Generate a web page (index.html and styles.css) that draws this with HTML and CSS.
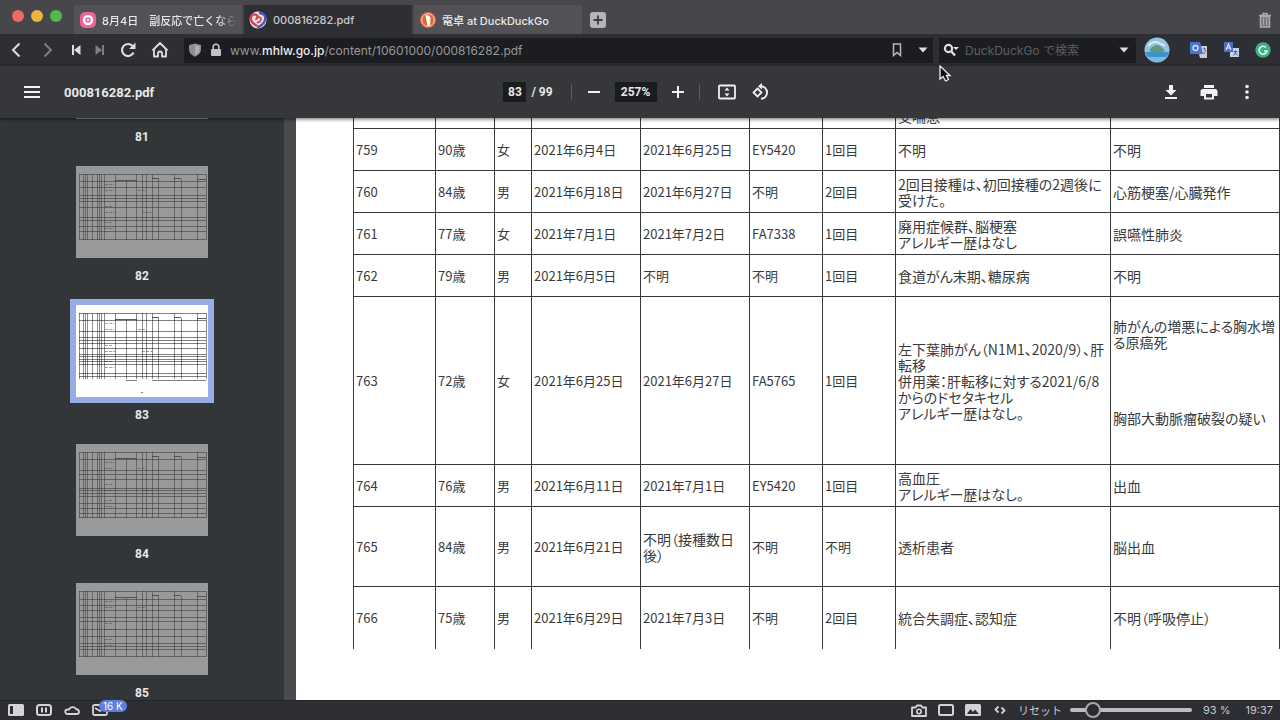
FILE: index.html
```html
<!DOCTYPE html>
<html lang="ja">
<head>
<meta charset="utf-8">
<title>000816282.pdf</title>
<link rel="stylesheet" href="styles.css">
</head>
<body>
<header class="tabbar">
  <div class="lights"><i class="light red"></i><i class="light yellow"></i><i class="light green"></i></div>
  <nav class="tabs">
    <button class="tab">
      <svg width="16" height="16" viewBox="0 0 16 16"><rect width="16" height="16" rx="5" fill="#f0609a"/><circle cx="8" cy="8" r="4" fill="none" stroke="#fff" stroke-width="2.4"/><circle cx="8" cy="8" r="1.2" fill="#fff"/></svg>
      <span class="tab-label fade">8月4日　副反応で亡くなら</span>
    </button>
    <button class="tab active">
      <svg width="18" height="18" viewBox="0 0 18 18"><circle cx="9" cy="9" r="8.5" fill="#e4e3ee"/><path d="M8 15C3 12 1 9 2 6s5-4 7 0" fill="none" stroke="#d9404c" stroke-width="2.4"/><path d="M10 2c5 0 7 3 6 7s-5 7-8 7" fill="none" stroke="#4a58b5" stroke-width="2.4"/><path d="M7 9c0-3 5-4 5-1s-3 4-4 3" fill="none" stroke="#d9404c" stroke-width="1.8"/></svg>
      <span class="tab-label">000816282.pdf</span>
    </button>
    <button class="tab">
      <svg width="16" height="16" viewBox="0 0 16 16"><circle cx="8" cy="8" r="8" fill="#d9663e"/><circle cx="8" cy="8" r="6.3" fill="none" stroke="#f4d9cd" stroke-width="1"/><path d="M5.5 3.5C8 2.5 10.500 4 10.500 6.500L10 13.500 7.500 14z" fill="#fff"/><path d="M9 8l3 .5-3 1z" fill="#f3c13a"/></svg>
      <span class="tab-label">電卓 at DuckDuckGo</span>
    </button>
    <button class="icon newtab" aria-label="新しいタブ"><svg width="16" height="16" viewBox="0 0 16 16"><rect width="16" height="16" rx="3" fill="#b5b5b8"/><path d="M8 3.500v9M3.500 8h9" stroke="#3c3c40" stroke-width="1.800"/></svg></button>
  </nav>
  <button class="icon trash" aria-label="閉じたタブ"><svg width="14" height="16" viewBox="0 0 14 16"><path d="M1 3.500h12M5 3V1.500h4V3" fill="none" stroke="#aaaaad" stroke-width="1.600"/><path d="M2.500 4.500h9V15h-9z" fill="#77777b" stroke="#aaaaad" stroke-width="1.500"/><path d="M5.500 6v7M8.500 6v7" stroke="#aaaaad"/></svg></button>
</header>

<div class="navbar">
  <div class="nav-buttons">
    <button class="icon" aria-label="戻る"><svg width="16" height="18" viewBox="0 0 16 18"><path d="M11.500 2.500 5 9l6.500 6.500" fill="none" stroke="#dededf" stroke-width="2"/></svg></button>
    <button class="icon dim" aria-label="進む"><svg width="16" height="18" viewBox="0 0 16 18"><path d="M4.500 2.500 11 9l-6.500 6.500" fill="none" stroke="#dededf" stroke-width="2"/></svg></button>
    <button class="icon narrow" aria-label="巻き戻し"><svg width="10" height="12" viewBox="0 0 10 12"><path d="M1 1h2v10H1zM9.500 1v10L3 6z" fill="#dededf"/></svg></button>
    <button class="icon narrow dim" aria-label="早送り"><svg width="10" height="12" viewBox="0 0 10 12"><path d="M7 1h2v10H7zM.5 1v10L7 6z" fill="#dededf"/></svg></button>
    <button class="icon" aria-label="再読み込み"><svg width="18" height="18" viewBox="0 0 18 18"><path d="M14.500 11.500A6 6 0 1 1 13.500 5" fill="none" stroke="#dededf" stroke-width="2.200"/><path d="M16.500 1.500V8H10z" fill="#dededf"/></svg></button>
    <button class="icon" aria-label="ホーム"><svg width="18" height="18" viewBox="0 0 18 18"><path d="M1.500 9.500 9 2l7.500 7.500M3 8.500V15.500h4v-3a2 2 0 0 1 4 0v3h4V8.500" fill="none" stroke="#dededf" stroke-width="1.800" stroke-linejoin="round"/></svg></button>
  </div>
  <div class="field address">
    <svg width="14" height="14" viewBox="0 0 14 14"><path d="M1 2l6-1.500L13 2v4c0 4-3 6.500-6 7.700C4 12.500 1 10 1 6z" fill="#8d8e91"/><path d="M7 2v10c2.500-1.300 4.500-3 4.500-6V3z" fill="#adaeb1"/></svg>
    <svg width="12" height="14" viewBox="0 0 12 14"><rect x="1" y="6" width="10" height="7" rx="1" fill="#c2c3c5"/><path d="M3.200 6.500V4a2.800 2.800 0 0 1 5.600 0v2.500" fill="none" stroke="#c2c3c5" stroke-width="1.600"/></svg>
    <div class="url" role="textbox" aria-label="アドレス" contenteditable="true" spellcheck="false">www.<b>mhlw.go.jp</b>/content/10601000/000816282.pdf</div>
    <button class="icon small" aria-label="ブックマーク"><svg width="10" height="14" viewBox="0 0 10 14"><path d="M1.500 1h7v11.500L5 9.500l-3.500 3z" fill="none" stroke="#b8b9bb" stroke-width="1.500"/></svg></button>
    <button class="icon small" aria-label="履歴"><svg width="10" height="6" viewBox="0 0 10 6"><path d="M.5.5h9L5 5.500z" fill="#dededf"/></svg></button>
  </div>
  <div class="field search">
    <svg width="16" height="14" viewBox="0 0 16 14"><circle cx="5.500" cy="5.500" r="3.600" fill="none" stroke="#dededf" stroke-width="2.200"/><path d="M8 8l4 4.500" stroke="#dededf" stroke-width="2.400"/><path d="M10 4h6l-3 3z" fill="#dededf"/></svg>
    <input class="search-input" type="text" aria-label="検索" placeholder="DuckDuckGo で検索">
    <button class="icon small" aria-label="検索エンジン"><svg width="10" height="6" viewBox="0 0 10 6"><path d="M.5.5h9L5 5.500z" fill="#dededf"/></svg></button>
  </div>
  <div class="extensions">
    <button class="icon ext-wide" aria-label="プロフィール"><svg width="26" height="26" viewBox="0 0 26 26"><circle cx="13" cy="13" r="12.500" fill="#93c5e2"/><path d="M1 15h24a12.500 12.500 0 0 1-24 0z" fill="#3f92c9"/><path d="M3 20h20a12.500 12.500 0 0 1-20 0z" fill="#75bce4"/><path d="M5 14c2-4 5-6 8-6s6 3 8 6c-4 2-12 2-16 0z" fill="#5c9b83"/><path d="M4 9c3-4 8-5 11-3s4 1 6 3" fill="none" stroke="#d7ebf3" stroke-width="2"/></svg></button>
    <button class="icon" aria-label="翻訳"><svg width="18" height="16" viewBox="0 0 18 16"><path d="M7 4h10v12h-7z" fill="#c9cbd4"/><path d="M0 0h10l3 12H0z" fill="#4b74cf"/><circle cx="5.500" cy="6" r="2.500" fill="none" stroke="#dce5f8" stroke-width="1.300"/><path d="M13 7h3m-1.500-1v2m-1 4 2.500-4" stroke="#666f86"/></svg></button>
    <button class="icon" aria-label="文字翻訳"><svg width="17" height="16" viewBox="0 0 17 16"><path d="M7 6h9v9H7z" fill="#c9d1e6"/><path d="M1 0h9v10H1z" fill="#4c6fc4"/><path d="M3 8l2.500-6L8 8M4 6h3" fill="none" stroke="#e4eafa" stroke-width="1.200"/><path d="M10.500 9.500h4m-2-1v1m-2 4 3-4m-2 0 3 4" stroke="#4662a8"/></svg></button>
    <button class="icon" aria-label="文章校正"><svg width="16" height="16" viewBox="0 0 16 16"><circle cx="8" cy="8" r="7.700" fill="#37b084"/><path d="M11 5.500A4 4 0 1 0 12 9H9" fill="none" stroke="#e0f4ec" stroke-width="1.600"/></svg></button>
  </div>
</div>

<div class="pdfbar">
  <div class="pdf-left">
    <button class="icon" aria-label="メニュー"><svg width="16" height="12" viewBox="0 0 16 12"><path d="M0 1h16M0 6h16M0 11h16" stroke="#f1f1f1" stroke-width="2"/></svg></button>
    <h1 class="title">000816282.pdf</h1>
  </div>
  <div class="pdf-center">
    <input class="box page-box" type="text" aria-label="ページ番号" value="83">
    <span class="total">/ 99</span>
    <i class="rule"></i>
    <button class="icon" aria-label="縮小"><svg width="14" height="14" viewBox="0 0 14 14"><path d="M1 7h12" stroke="#f1f1f1" stroke-width="2"/></svg></button>
    <input class="box zoom-box" type="text" aria-label="倍率" value="257%">
    <button class="icon" aria-label="拡大"><svg width="14" height="14" viewBox="0 0 14 14"><path d="M1 7h12M7 1v12" stroke="#f1f1f1" stroke-width="2"/></svg></button>
    <i class="rule rule-end"></i>
    <button class="icon fit" aria-label="ページに合わせる"><svg width="18" height="16" viewBox="0 0 18 16"><rect x="1" y="1.500" width="16" height="13" rx="1" fill="none" stroke="#f1f1f1" stroke-width="1.800"/><path d="M9 3.500 11.500 6.500h-5zM9 12.500 6.500 9.500h5z" fill="#f1f1f1"/></svg></button>
    <button class="icon" aria-label="回転"><svg width="18" height="18" viewBox="0 0 18 18"><path d="M5.500 5.500 9.500 9.500l-4 4-4-4z" fill="none" stroke="#f1f1f1" stroke-width="1.800"/><path d="M8.500 3.200a6.200 6.200 0 1 1 .5 12.600" fill="none" stroke="#f1f1f1" stroke-width="1.900"/><path d="M10 0v6.500L6 3.200z" fill="#f1f1f1"/></svg></button>
  </div>
  <div class="pdf-right">
    <button class="icon" aria-label="ダウンロード"><svg width="14" height="16" viewBox="0 0 14 16"><path d="M5 1h4v5h3.500L7 11.500 1.500 6H5zM1 13h12v2H1z" fill="#f1f1f1"/></svg></button>
    <button class="icon" aria-label="印刷"><svg width="18" height="16" viewBox="0 0 18 16"><path d="M4 1h10v3H4zM3 5h12a2.500 2.500 0 0 1 2.500 2.500V12H14v3.500H4V12H.5V7.500A2.500 2.500 0 0 1 3 5zm3 5v3.500h6V10z" fill="#f1f1f1" fill-rule="evenodd"/></svg></button>
    <button class="icon" aria-label="その他"><svg width="6" height="16" viewBox="0 0 6 16"><circle cx="3" cy="2.500" r="1.800" fill="#f1f1f1"/><circle cx="3" cy="8" r="1.800" fill="#f1f1f1"/><circle cx="3" cy="13.500" r="1.800" fill="#f1f1f1"/></svg></button>
  </div>
</div>

<main class="viewer">
  <svg class="defs" width="0" height="0" aria-hidden="true">
    <symbol id="grid" viewBox="0 0 132 92">
      <path d="M3.500 8v66M7.500 8v66M9.500 8v66M11.500 8v66M16.500 8v66M21.500 8v66M23.500 8v66M25.500 8v66M28.500 8v66M39.500 8v66M50.500 15v59M60.500 8v66M66.500 8v66M70.500 8v66M76.500 8v66M82.500 13v61M98.500 8v66M105.500 13v61M121.500 8v66M130.500 8v66" stroke="#000" stroke-opacity=".5"/>
      <path d="M39 14.500h22M76 12.500h7M98 12.500h7M121 13.500h9" stroke="#000" stroke-opacity=".7"/>
      <path d="M29 18.500h9M29 24.500h9M29 40.500h8M29 46.500h10M29 56.500h8M29 62.500h9M62 24.500h7M66 46.500h10" stroke="#000" stroke-opacity=".4" stroke-dasharray="3 1"/>
    </symbol>
  </svg>
  <nav class="sidebar" aria-label="ページ一覧">
    <div class="thumbs">
      <button class="thumb"><span class="paper"><svg viewBox="0 0 132 92"><use href="#grid"/></svg></span><span class="num">81</span></button>
      <button class="thumb"><span class="paper"><svg viewBox="0 0 132 92"><use href="#grid"/><path d="M3 8.500h127M3 15.500h127M3 21.500h127M3 29.500h127M3 32.500h127M3 35.500h127M3 41.500h127M3 51.500h127M3 54.500h127M3 60.500h127M3 65.500h127M3 73.500h127" stroke="#000" stroke-opacity=".55"/></svg></span><span class="num">82</span></button>
      <button class="thumb current"><span class="paper"><svg viewBox="0 0 132 92"><use href="#grid"/><path d="M3 8.500h127M3 15.500h127M3 26.500h127M3 32.500h127M3 35.500h127M3 38.500h127M3 43.500h127M3 49.500h127M3 51.500h127M3 54.500h127M3 56.500h127M3 59.500h127M3 68.500h127M3 71.500h127M50 75.500h11M76 75.500h54M65 87.500h2" stroke="#000" stroke-opacity=".55"/></svg></span><span class="num">83</span></button>
      <button class="thumb"><span class="paper"><svg viewBox="0 0 132 92"><use href="#grid"/><path d="M3 8.500h127M3 15.500h127M3 26.500h127M3 30.500h127M3 35.500h127M3 44.500h127M3 46.500h127M3 49.500h127M3 52.500h127M3 59.500h127M3 64.500h127M3 69.500h127M3 73.500h127" stroke="#000" stroke-opacity=".55"/></svg></span><span class="num">84</span></button>
      <button class="thumb"><span class="paper"><svg viewBox="0 0 132 92"><use href="#grid"/><path d="M3 8.500h127M3 16.500h127M3 22.500h127M3 27.500h127M3 34.500h127M3 38.500h127M3 46.500h127M3 53.500h127M3 60.500h127M3 63.500h127M3 66.500h127M3 73.500h127" stroke="#000" stroke-opacity=".55"/></svg></span><span class="num">85</span></button>
    </div>
  </nav>
  <section class="page">
    <table class="report">
      <colgroup><col class="c-no"><col class="c-age"><col class="c-sex"><col class="c-date"><col class="c-date"><col class="c-lot"><col class="c-dose"><col class="c-hist"><col class="c-cause"></colgroup>
      <tbody>
        <tr class="r-short"><td></td><td></td><td></td><td></td><td></td><td></td><td></td><td class="text">気管<br>支喘息</td><td></td></tr>
        <tr class="r-short"><td>759</td><td>90歳</td><td>女</td><td>2021年6月4日</td><td>2021年6月25日</td><td>EY5420</td><td>1回目</td><td class="text">不明</td><td class="text">不明</td></tr>
        <tr class="r-short"><td>760</td><td>84歳</td><td>男</td><td>2021年6月18日</td><td>2021年6月27日</td><td>不明</td><td>2回目</td><td class="text">2回目接種は、初回接種の2週後に<br>受けた。</td><td class="text">心筋梗塞/心臓発作</td></tr>
        <tr class="r-short"><td>761</td><td>77歳</td><td>女</td><td>2021年7月1日</td><td>2021年7月2日</td><td>FA7338</td><td>1回目</td><td class="text">廃用症候群、脳梗塞<br>アレルギー歴はなし</td><td class="text">誤嚥性肺炎</td></tr>
        <tr class="r-short"><td>762</td><td>79歳</td><td>男</td><td>2021年6月5日</td><td>不明</td><td>不明</td><td>1回目</td><td class="text">食道がん末期、糖尿病</td><td class="text">不明</td></tr>
        <tr class="r-tall"><td>763</td><td>72歳</td><td>女</td><td>2021年6月25日</td><td>2021年6月27日</td><td>FA5765</td><td>1回目</td><td class="text">左下葉肺がん（N1M1、2020/9）、肝<br>転移<br>併用薬：肝転移に対する2021/6/8<br>からのドセタキセル<br>アレルギー歴はなし。</td><td class="text"><div class="part first">肺がんの増悪による胸水増<br>る原癌死</div><div class="part second">胸部大動脈瘤破裂の疑い</div></td></tr>
        <tr class="r-short"><td>764</td><td>76歳</td><td>男</td><td>2021年6月11日</td><td>2021年7月1日</td><td>EY5420</td><td>1回目</td><td class="text">高血圧<br>アレルギー歴はなし。</td><td class="text">出血</td></tr>
        <tr class="r-mid"><td>765</td><td>84歳</td><td>男</td><td>2021年6月21日</td><td class="text">不明（接種数日<br>後）</td><td>不明</td><td>不明</td><td class="text">透析患者</td><td class="text">脳出血</td></tr>
        <tr class="r-last"><td>766</td><td>75歳</td><td>男</td><td>2021年6月29日</td><td>2021年7月3日</td><td>不明</td><td>2回目</td><td class="text">統合失調症、認知症</td><td class="text">不明（呼吸停止）</td></tr>
      </tbody>
    </table>
  </section>
</main>

<footer class="status">
  <div class="status-left">
    <button class="icon" aria-label="パネル"><svg width="16" height="12" viewBox="0 0 16 12"><rect width="16" height="12" rx="1.500" fill="#d4d4d6"/><path d="M2 2h3v8H2z" fill="#2d2e33"/></svg></button>
    <button class="icon" aria-label="タイル"><svg width="16" height="12" viewBox="0 0 16 12"><rect x="1" y="1" width="14" height="10" rx="2.500" fill="none" stroke="#d4d4d6" stroke-width="2"/><path d="M6 3.500v5M10 3.500v5" stroke="#d4d4d6" stroke-width="2"/></svg></button>
    <button class="icon" aria-label="同期"><svg width="16" height="12" viewBox="0 0 16 12"><path d="M3.500 10a2.200 2.200 0 0 1 0-4.500H5a4 4 0 0 1 7-.5c2 .3 3 1.500 3 3s-1 2-2.500 2z" fill="none" stroke="#d4d4d6" stroke-width="1.800"/></svg></button>
    <button class="icon mail" aria-label="メール"><svg width="16" height="12" viewBox="0 0 16 12"><rect x="1" y="1" width="14" height="10" rx="1.500" fill="none" stroke="#d4d4d6" stroke-width="1.800"/><path d="M3 4l5 3 5-3" fill="none" stroke="#d4d4d6" stroke-width="1.600"/></svg><span class="badge">16 K</span></button>
  </div>
  <div class="status-right">
    <button class="icon" aria-label="キャプチャ"><svg width="16" height="13" viewBox="0 0 16 13"><path d="M1 3.500h3.500L6 1.500h4l1.500 2H15V12H1z" fill="none" stroke="#d4d4d6" stroke-width="1.800" stroke-linejoin="round"/><circle cx="8" cy="7.500" r="2.200" fill="none" stroke="#d4d4d6" stroke-width="1.600"/></svg></button>
    <button class="icon" aria-label="ウィンドウ"><svg width="16" height="12" viewBox="0 0 16 12"><rect x="1" y="1" width="14" height="10" rx="1.500" fill="none" stroke="#d4d4d6" stroke-width="2"/></svg></button>
    <button class="icon" aria-label="画像"><svg width="16" height="12" viewBox="0 0 16 12"><rect width="16" height="12" rx="1.500" fill="#d4d4d6"/><path d="M2 10l3.500-5 2.500 3 2-2.500L14 10z" fill="#2d2e33"/></svg></button>
    <button class="icon" aria-label="ページ効果"><svg width="12" height="10" viewBox="0 0 12 10"><path d="M4.500 1.500 1.500 4.500l3 3M7.500 2.500l3 3-3 3" fill="none" stroke="#d4d4d6" stroke-width="1.800"/></svg></button>
    <button class="reset">リセット</button>
    <input class="slider" type="range" min="0" max="100" value="14" aria-label="ズーム">
    <span class="percent">93 %</span>
    <span class="clock">19:37</span>
  </div>
</footer>
<svg class="cursor" width="13" height="18" viewBox="0 0 13 18" aria-hidden="true"><path d="M1 1v13l3-2.500 2.500 4.500 3-1.500L7.500 10.500H11z" fill="#111" stroke="#eee" stroke-width="1.300"/></svg>
</body>
</html>
```
FILE: styles.css
```css
* { box-sizing: border-box; }
body {
  margin: 0;
  height: 100vh;
  display: flex;
  flex-direction: column;
  overflow: hidden;
  background: #323639;
  color: #e8e8ea;
  font-family: Inter, "Noto Sans CJK JP", sans-serif;
  font-size: 12px;
}
button, input { font: inherit; color: inherit; border: 0; margin: 0; padding: 0; background: none; }
svg { display: block; flex: none; }
.icon { display: flex; align-items: center; justify-content: center; width: 32px; height: 100%; flex: none; }
.dim { opacity: .45; }

.tabbar { display: flex; height: 34px; flex: none; background: #47464b; }
.lights { display: flex; gap: 7px; width: 74px; padding: 10px 0 0 12px; }
.light { width: 12px; height: 12px; border-radius: 50%; }
.red { background: #ec6a65; }
.yellow { background: #e9b740; }
.green { background: #50b94c; }
.tabs { display: flex; flex: 1; gap: 2px; padding-top: 5px; min-width: 0; }
.tab { display: flex; align-items: center; gap: 6px; width: 168px; padding: 0 4px 0 6px; background: #525156; overflow: hidden; }
.tab.active { background: #2e2f34; color: #c8c8cb; padding-left: 5px; }
.tab-label { white-space: nowrap; font-weight: 500; font-size: 11px; }
.fade { -webkit-mask-image: linear-gradient(90deg, #000 85%, transparent); mask-image: linear-gradient(90deg, #000 85%, transparent); }
.newtab { width: 28px; }
.trash { width: 30px; padding-top: 5px; }

.navbar { display: flex; align-items: center; height: 32px; flex: none; background: #2e2f34; }
.nav-buttons { display: flex; align-items: center; height: 32px; width: 184px; }
.narrow { width: 24px; }
.field { display: flex; align-items: center; height: 25px; background: #1c1d21; }
.address { flex: 1; min-width: 0; gap: 8px; padding-left: 4px; }
.url { flex: 1; font-size: 12px; color: #97989b; white-space: nowrap; overflow: hidden; outline: 0; }
.url b { font-weight: 500; color: #ececee; }
.small { width: 16px; margin-right: 2px; }
.search { width: 197px; margin: 0 7px 0 6px; padding: 0 2px 0 4px; gap: 6px; }
.search-input { flex: 1; min-width: 0; outline: 0; font-size: 12px; }
.search-input::placeholder { color: #5d5e62; opacity: 1; }
.extensions { display: flex; align-items: center; height: 32px; width: 137px; }
.extensions .ext-wide { width: 40px; padding-right: 12px; }

.pdfbar {
  display: grid;
  grid-template-columns: 1fr auto 1fr;
  align-items: center;
  height: 52px;
  flex: none;
  background: #35373a;
  box-shadow: 0 1px 4px rgba(0, 0, 0, .6);
  position: relative;
  z-index: 1;
  font-family: Roboto, sans-serif;
  font-size: 13px;
  font-weight: 700;
}
.pdf-left { display: flex; align-items: center; gap: 16px; padding-left: 16px; }
.title { margin: 0; font-size: 13px; font-weight: 700; }
.pdf-center { display: flex; align-items: center; }
.box { height: 20px; background: #1b1c1f; text-align: center; font-size: 12px; }
.page-box { width: 23px; }
.total { padding-left: 5px; font-size: 12px; }
.rule { width: 1px; height: 16px; background: #5b5d60; margin: 0 6px 0 18px; }
.rule-end { margin: 0 5px; }
.zoom-box { width: 42px; margin: 0 5px; }
.fit { margin: 0 2px 0 6px; }
.pdf-right { display: flex; justify-content: flex-end; gap: 6px; padding-right: 17px; }

.viewer { display: flex; flex: 1; min-height: 0; }
.defs { position: absolute; }
.sidebar { width: 296px; flex: none; overflow: hidden; border-right: 12px solid #494b4e; background: #323639; }
.thumbs { display: flex; flex-direction: column; align-items: center; gap: 11px; margin-top: -97px; }
.thumb { display: flex; flex-direction: column; align-items: center; flex: none; font-family: Roboto, sans-serif; font-size: 12px; font-weight: 700; }
.paper { width: 144px; border: 6px solid transparent; background: #98999b; background-clip: padding-box; }
.paper svg { opacity: .65; }
.num { line-height: 24px; }
.current .paper { border-color: #98ade6; background-color: #fff; }
.current .paper svg { opacity: .9; }

.page { flex: 1; min-width: 0; overflow: hidden; background: #fff; color: #3a3a3c; padding-left: 57px; }
.report {
  width: 100%;
  margin-top: -32px;
  table-layout: fixed;
  border-collapse: collapse;
  font-family: "Noto Sans CJK JP", sans-serif;
  font-size: 13px;
  line-height: 16px;
}
.report td { border: 1px solid #39393b; padding: 0 2px; white-space: nowrap; vertical-align: middle; }
.report .text { font-size: 14px; font-feature-settings: "palt"; }
.c-no { width: 82px; }
.c-age { width: 59px; }
.c-sex { width: 37px; }
.c-date { width: 109px; }
.c-lot { width: 73px; }
.c-dose { width: 73px; }
.c-hist { width: 215px; }
.r-short { height: 42px; }
.r-tall { height: 168px; }
.r-mid { height: 80px; }
.r-last { height: 62px; }
.report .r-last td { border-bottom: 0; }
.part { display: flex; align-items: center; }
.first { height: 74px; }
.second { height: 93px; }

.status { display: flex; justify-content: space-between; height: 20px; flex: none; background: #2d2e33; box-shadow: inset 0 1px #242529; font-size: 11px; color: #c8c8cb; position: relative; z-index: 2; }
.status-left, .status-right { display: flex; align-items: center; }
.status-left { padding-left: 2px; }
.status-left .icon { width: 28px; }
.mail { position: relative; }
.badge { position: absolute; left: 13px; top: 0; padding: 0 4px; border-radius: 8px; background: #5d7fe0; color: #fff; font-size: 10px; line-height: 12px; white-space: nowrap; }
.status-right .icon { width: 27px; }
.status-right { padding-right: 7px; }
.reset { padding: 0 8px 0 5px; }
.slider { appearance: none; width: 122px; height: 16px; }
.slider::-webkit-slider-runnable-track { height: 4px; border-radius: 2px; background: #bdbdc0; }
.slider::-webkit-slider-thumb { appearance: none; width: 16px; height: 16px; margin-top: -6px; border: 2px solid #a8a8ab; border-radius: 50%; background: #2a2b2f; }
.percent { padding: 0 15px 0 11px; }
.cursor { position: absolute; left: 939px; top: 65px; z-index: 3; }
```
